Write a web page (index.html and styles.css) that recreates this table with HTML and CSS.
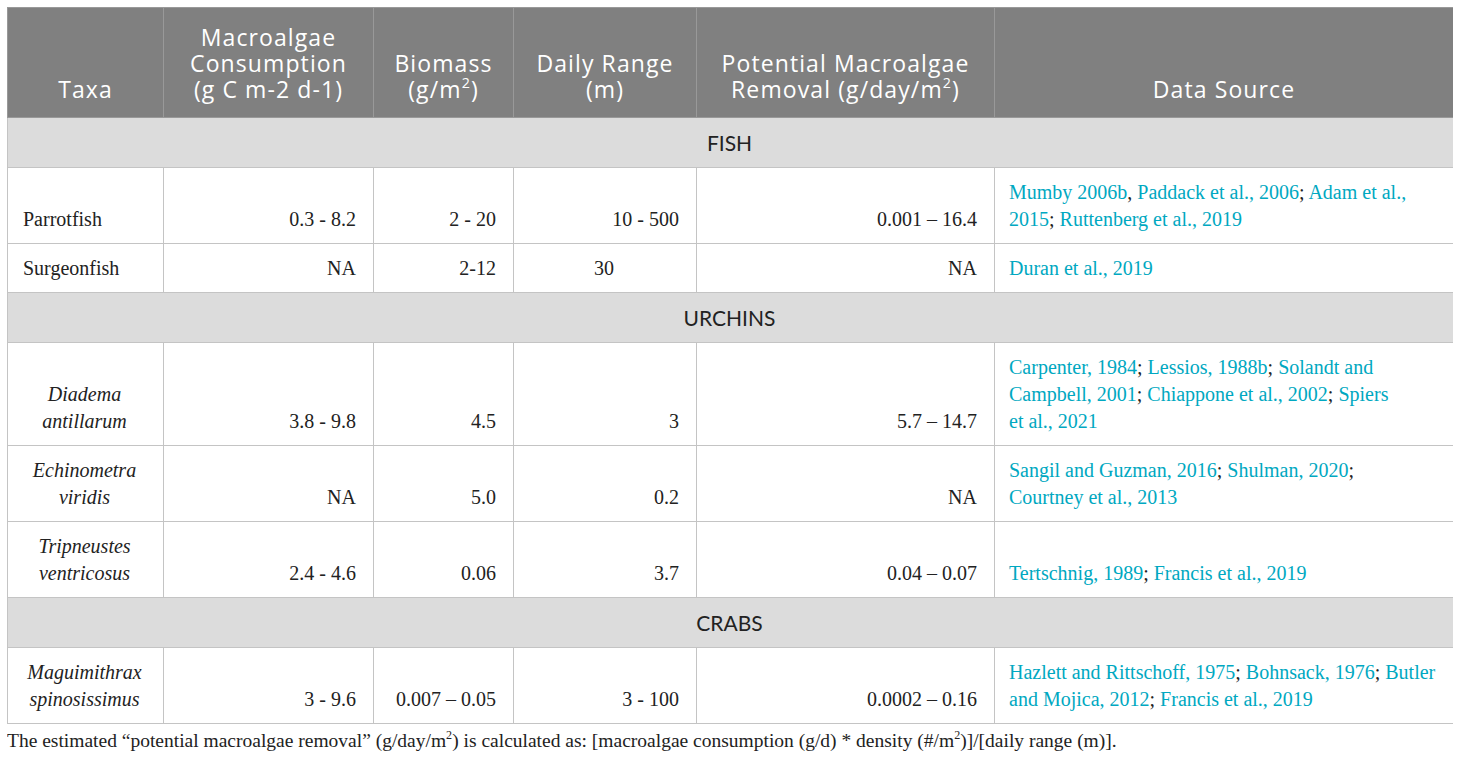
FILE: index.html
```html
<!DOCTYPE html>
<html><head>
<title>Macroalgae removal by herbivores</title>
<link rel="stylesheet" href="styles.css">
</head><body>
<table class="data">
<colgroup>
<col class="c-taxa">
<col class="c-cons">
<col class="c-bio">
<col class="c-range">
<col class="c-pot">
<col class="c-src">
</colgroup>
<thead>
<tr>
<th>Taxa</th>
<th>Macroalgae Consumption <span class="unit">(g C m-2 d-1)</span></th>
<th>Biomass <span class="unit">(g/m<sup>2</sup>)</span></th>
<th>Daily Range <span class="unit">(m)</span></th>
<th>Potential Macroalgae Removal <span class="unit">(g/day/m<sup>2</sup>)</span></th>
<th>Data Source</th>
</tr>
</thead>
<tbody>
<tr class="group"><td colspan="6">FISH</td></tr>
<tr>
<td class="name">Parrotfish</td>
<td class="num">0.3 - 8.2</td>
<td class="num">2 - 20</td>
<td class="num">10 - 500</td>
<td class="num">0.001 – 16.4</td>
<td class="src"><a>Mumby 2006b</a>, <a>Paddack et al., 2006</a>; <a>Adam et al., 2015</a>; <a>Ruttenberg et al., 2019</a></td>
</tr>
<tr>
<td class="name">Surgeonfish</td>
<td class="num">NA</td>
<td class="num">2-12</td>
<td class="mid">30</td>
<td class="num">NA</td>
<td class="src"><a>Duran et al., 2019</a></td>
</tr>
<tr class="group"><td colspan="6">URCHINS</td></tr>
<tr>
<td class="species">Diadema antillarum</td>
<td class="num">3.8 - 9.8</td>
<td class="num">4.5</td>
<td class="num">3</td>
<td class="num">5.7 – 14.7</td>
<td class="src"><a>Carpenter, 1984</a>; <a>Lessios, 1988b</a>; <a>Solandt and Campbell, 2001</a>; <a>Chiappone et al., 2002</a>; <a>Spiers<br>et al., 2021</a></td>
</tr>
<tr>
<td class="species">Echinometra viridis</td>
<td class="num">NA</td>
<td class="num">5.0</td>
<td class="num">0.2</td>
<td class="num">NA</td>
<td class="src"><a>Sangil and Guzman, 2016</a>; <a>Shulman, 2020</a>;<br><a>Courtney et al., 2013</a></td>
</tr>
<tr>
<td class="species">Tripneustes ventricosus</td>
<td class="num">2.4 - 4.6</td>
<td class="num">0.06</td>
<td class="num">3.7</td>
<td class="num">0.04 – 0.07</td>
<td class="src"><a>Tertschnig, 1989</a>; <a>Francis et al., 2019</a></td>
</tr>
<tr class="group"><td colspan="6">CRABS</td></tr>
<tr>
<td class="species">Maguimithrax spinosissimus</td>
<td class="num">3 - 9.6</td>
<td class="num">0.007 – 0.05</td>
<td class="num">3 - 100</td>
<td class="num">0.0002 – 0.16</td>
<td class="src"><a>Hazlett and Rittschoff, 1975</a>; <a>Bohnsack, 1976</a>; <a>Butler and Mojica, 2012</a>; <a>Francis et al., 2019</a></td>
</tr>
</tbody>
</table>
<p class="note">The estimated “potential macroalgae removal” (g/day/m<sup>2</sup>) is calculated as: [macroalgae consumption (g/d) * density (#/m<sup>2</sup>)]/[daily range (m)].</p>
</body></html>
```

FILE: styles.css
```css
body {margin: 7px; background: #fff; color: #222; font-family: "Liberation Serif", "Times New Roman", serif;}
sup {font-size: 0.62em; line-height: 0; vertical-align: 0.7em;}

.data {width: 1446px; table-layout: fixed; border-collapse: collapse; border: 1px solid #c4c4c4;}
.c-taxa {width: 156px;}
.c-cons {width: 210px;}
.c-bio {width: 140px;}
.c-range {width: 183px;}
.c-pot {width: 298px;}
.c-src {width: 459px;}

.data th {background: #808080; color: #fff; font-family: "Open Sans", Lato, sans-serif; font-weight: normal; font-size: 23px; letter-spacing: 1.1px; line-height: 26px; padding: 16px 6px 15px; text-align: center; vertical-align: bottom; border: 1px solid #999;}
.data th .unit {white-space: nowrap;}
.data td {font-size: 20px; line-height: 27px; padding: 11px 17px 10px 15px; vertical-align: bottom; border: 1px solid #c4c4c4;}

.data .group td {background: #dcdcdc; font-family: Lato, "Open Sans", sans-serif; font-size: 21px; line-height: 28px; text-align: center; color: #222;}
.data .name {text-align: left;}
.data .species {text-align: center; font-style: italic;}
.data .num {text-align: right;}
.data .mid {text-align: center;}
.data .src {padding-left: 14px; padding-right: 10px;}
.data .src a {color: #00a8c1; text-decoration: none;}

.note {margin: 5px 0 0; font-size: 19.5px; line-height: 24px; color: #222;}
```
